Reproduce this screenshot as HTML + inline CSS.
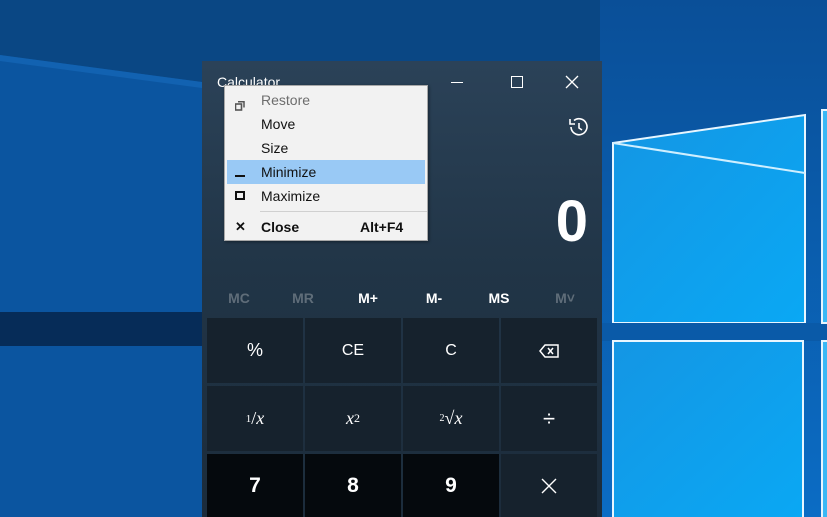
<!DOCTYPE html>
<html><head><style>
*{margin:0;padding:0;box-sizing:border-box}
body{width:827px;height:517px;overflow:hidden;position:relative;background:#0b55a0;font-family:"Liberation Sans",sans-serif}
.abs{position:absolute}
.win{left:202px;top:61px;width:400px;height:456px;background:linear-gradient(180deg,#2b4258 0%,#213547 45%,#1c2c3b 100%)}
.btn{position:absolute;width:96px;height:65px;background:#16222d;color:#fff;display:flex;align-items:center;justify-content:center;font-size:18px}
.dig{background:#05090d;font-weight:bold;font-size:21px}
.mem{position:absolute;top:229px;font-size:14px;font-weight:bold;color:#fff;width:60px;text-align:center}
.menu{left:224px;top:85px;width:204px;height:156px;background:#f2f2f2;border:1px solid #a8a8a8;box-shadow:1px 1px 3px rgba(0,0,0,.4);font-size:14px;color:#111}
.it{position:absolute;left:0;width:202px;height:24px;line-height:24px;padding-left:36px}
.ic{position:absolute;left:10px}
</style></head><body>
<svg class="abs" style="left:0;top:0" width="827" height="517">
<defs>
<linearGradient id="pane" x1="0" y1="0" x2="1" y2="1"><stop offset="0" stop-color="#1496e4"/><stop offset="1" stop-color="#0aa8f4"/></linearGradient>
<linearGradient id="tr" x1="0" y1="0" x2="0" y2="1"><stop offset="0" stop-color="#0a4f98"/><stop offset="1" stop-color="#0b6cc4"/></linearGradient>
</defs>
<polygon points="0,0 827,0 827,95 202,82 0,55" fill="#0a4784"/>
<polygon points="0,55 202,82 202,88 0,61" fill="#1668b8" opacity=".7"/>
<rect x="0" y="312" width="827" height="34" fill="#062c58"/>
<rect x="600" y="0" width="227" height="517" fill="url(#tr)"/>
<polygon points="613,143 805,115 805,323 613,323" fill="url(#pane)" stroke="#e8f6ff" stroke-width="2"/>
<line x1="613" y1="143" x2="805" y2="173" stroke="#cfefff" stroke-width="2"/>
<rect x="600" y="323" width="227" height="18" fill="#0a5aa8"/>
<rect x="613" y="341" width="190" height="180" fill="url(#pane)" stroke="#e8f6ff" stroke-width="2"/>
<rect x="822" y="110" width="10" height="213" fill="#3ab8f5" stroke="#e8f6ff" stroke-width="2"/>
<rect x="822" y="341" width="10" height="180" fill="#3ab8f5" stroke="#e8f6ff" stroke-width="2"/>
</svg>
<div class="abs win">
<div class="abs" style="left:15px;top:13px;color:#fff;font-size:14px">Calculator</div>
<div class="abs" style="left:249px;top:21px;width:12px;height:1px;background:#fff"></div>
<div class="abs" style="left:309px;top:15px;width:12px;height:12px;border:1px solid #fff"></div>
<svg class="abs" style="left:363px;top:14px" width="14" height="14"><path d="M1 1L13 13M13 1L1 13" stroke="#fff" stroke-width="1.3"/></svg>
<svg class="abs" style="left:364px;top:54px" width="24" height="24"><path d="M5 12A8 8 0 1 0 8 5.5" fill="none" stroke="#fff" stroke-width="1.6"/><path d="M4 4L4 9L9 9" fill="none" stroke="#fff" stroke-width="1.6"/><path d="M13 8L13 13L16 15" fill="none" stroke="#fff" stroke-width="1.6"/></svg>
<div class="abs" style="right:14px;top:126px;color:#fff;font-size:58px;font-weight:bold;line-height:70px">0</div>
<div class="mem" style="left:7px;color:#5f6d79">MC</div>
<div class="mem" style="left:71px;color:#5f6d79">MR</div>
<div class="mem" style="left:136px">M+</div>
<div class="mem" style="left:202px">M-</div>
<div class="mem" style="left:267px">MS</div>
<div class="mem" style="left:333px;color:#5f6d79">M˅</div>
</div>
<div class="btn" style="left:207px;top:318px">%</div>
<div class="btn" style="left:305px;top:318px;font-size:16px">CE</div>
<div class="btn" style="left:403px;top:318px;font-size:16px">C</div>
<div class="btn" style="left:501px;top:318px"><svg width="20" height="14"><path d="M6 1H19V13H6L1 7Z" fill="none" stroke="#fff" stroke-width="1.5"/><path d="M9 4L14 10M14 4L9 10" stroke="#fff" stroke-width="1.5"/></svg></div>
<div class="btn" style="left:207px;top:386px;font-family:'Liberation Serif',serif"><sup style="font-size:11px">1</sup>/<i>x</i></div>
<div class="btn" style="left:305px;top:386px;font-family:'Liberation Serif',serif"><i>x</i><sup style="font-size:12px">2</sup></div>
<div class="btn" style="left:403px;top:386px;font-family:'Liberation Serif',serif"><sup style="font-size:10px">2</sup>√<i>x</i></div>
<div class="btn" style="left:501px;top:386px;font-size:22px">÷</div>
<div class="btn dig" style="left:207px;top:454px;height:63px">7</div>
<div class="btn dig" style="left:305px;top:454px;height:63px">8</div>
<div class="btn dig" style="left:403px;top:454px;height:63px">9</div>
<div class="btn" style="left:501px;top:454px;height:63px"><svg width="16" height="16"><path d="M1 1L15 15M15 1L1 15" stroke="#fff" stroke-width="1.4"/></svg></div>
<div class="abs menu">
<div class="it" style="top:2px;color:#6d6d6d"><span class="ic" style="top:6px"><svg width="10" height="10"><rect x="0.5" y="3" width="6" height="6" fill="none" stroke="#555" stroke-width="1.6"/><path d="M3 0.8H9V6.5" fill="none" stroke="#555" stroke-width="1.5"/></svg></span>Restore</div>
<div class="it" style="top:26px">Move</div>
<div class="it" style="top:50px">Size</div>
<div class="it" style="top:74px;background:#99c9f5;left:2px;width:198px;padding-left:34px"><span class="ic" style="left:8px;top:15px;width:10px;height:2px;background:#111"></span>Minimize</div>
<div class="it" style="top:98px"><span class="ic" style="top:7px;width:10px;height:9px;border:2px solid #111"></span>Maximize</div>
<div class="abs" style="left:35px;top:125px;width:167px;height:1px;background:#d0d0d0"></div>
<div class="it" style="top:129px;font-weight:bold"><span class="ic" style="top:0;font-size:13px">✕</span>Close<span style="position:absolute;left:135px">Alt+F4</span></div>
</div>
</body></html>
